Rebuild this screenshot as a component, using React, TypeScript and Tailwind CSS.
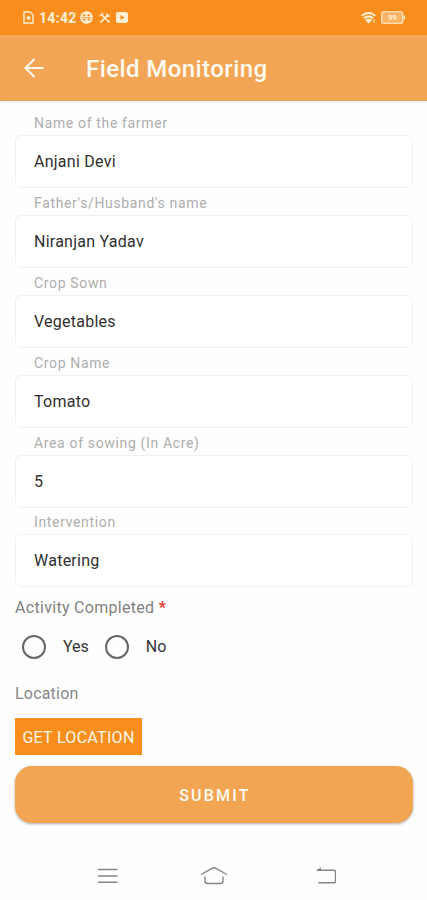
import { useState } from "react";

const fields = [
  { id: "farmer", label: "Name of the farmer", value: "Anjani Devi" },
  { id: "guardian", label: "Father's/Husband's name", value: "Niranjan Yadav" },
  { id: "cropSown", label: "Crop Sown", value: "Vegetables" },
  { id: "cropName", label: "Crop Name", value: "Tomato" },
  { id: "area", label: "Area of sowing (In Acre)", value: "5" },
  { id: "intervention", label: "Intervention", value: "Watering" },
];

function StatusBar() {
  return (
    <div className="flex h-[35px] items-center bg-[#f98e1e] pl-[23px] pr-[22px] text-[#fff0d5]">
      <svg className="h-[13px] w-[11px]" viewBox="0 0 11 13" fill="none" stroke="currentColor" strokeWidth="1.4">
        <path d="M1 1h6l3 3v8H1z" strokeLinejoin="round" />
        <path d="M5.5 5v4M3.5 7h4" strokeWidth="1.8" />
      </svg>
      <span className="ml-[5px] w-[37px] text-[14px] font-bold leading-none tracking-[0.3px]">14:42</span>
      <svg className="ml-1 h-[13px] w-[13px]" viewBox="0 0 13 13">
        <circle cx="6.5" cy="6.5" r="6.3" fill="currentColor" />
        <g fill="#f98e1e">
          <rect x="3" y="3.2" width="2.5" height="2" rx=".6" />
          <rect x="7.5" y="3.2" width="2.5" height="2" rx=".6" />
          <rect x="3" y="7.5" width="2.5" height="2" rx=".6" />
          <rect x="7.5" y="7.5" width="2.5" height="2" rx=".6" />
          <rect x="1.5" y="6" width="10" height=".7" />
        </g>
      </svg>
      <svg className="ml-[6px] h-[12px] w-[12px]" viewBox="0 0 12 12" fill="none" stroke="currentColor" strokeWidth="1.7">
        <path d="M3 3l7.5 7.5M1.5 10.5l7-7" />
        <path d="M1 4l3-3M8 1.5v2.5h3" />
      </svg>
      <svg className="ml-[5px] h-[11px] w-[12px]" viewBox="0 0 12 11">
        <rect width="12" height="11" rx="2.5" fill="currentColor" />
        <path d="M4.5 3v5l4-2.5z" fill="#f98e1e" />
      </svg>
      <svg className="ml-auto h-[12px] w-[15px]" viewBox="0 0 15 12" fill="none" stroke="currentColor" strokeWidth="2">
        <path d="M.8 3.8c4-3.6 9.4-3.6 13.4 0M3 6.3c2.8-2.4 6.2-2.4 9 0" />
        <path d="M4 8c2-1.6 5-1.6 7 0L7.5 11.5z" fill="currentColor" stroke="none" />
        <path d="M13 7v4" strokeWidth="1" />
      </svg>
      <svg className="ml-[5px] h-[13px] w-[24px]" viewBox="0 0 24 13">
        <rect x=".7" y=".7" width="21" height="11.6" rx="2" fill="#fbb466" stroke="currentColor" strokeWidth="1.1" />
        <path d="M22.5 4.5h1.5v4h-1.5z" fill="currentColor" />
        <text x="11.2" y="9" fill="currentColor" fontSize="7.5" fontWeight="700" textAnchor="middle">99</text>
      </svg>
    </div>
  );
}

function NavigationBar() {
  return (
    <nav className="mt-[43px] flex items-center pl-[98px] text-[#858585]">
      <svg className="h-5 w-5 shrink-0" viewBox="0 0 20 20" fill="none" stroke="currentColor" strokeWidth="1.4">
        <path d="M0 3.5h19.5M0 10h19.5M0 16.3h19.5" />
      </svg>
      <svg className="ml-[82px] h-5 w-[28px] shrink-0" viewBox="0 0 28 20" fill="none" stroke="currentColor" strokeWidth="1.4">
        <path d="M1 8.5L12 2.3Q14 1.3 16 2.3L27 8.5M5 10.5v4.5q0 2.5 2.5 2.5h13q2.5 0 2.5-2.5v-4.5" />
      </svg>
      <svg className="ml-[88px] h-5 w-5 shrink-0" viewBox="0 0 20 20" fill="none" stroke="currentColor" strokeWidth="1.4">
        <path d="M1 4.3h17q1.5 0 1.5 1.5v9.5q0 1.5-1.5 1.5H2.5" />
        <path d="M0 4.8l5-3.5v3.5z" fill="currentColor" stroke="none" />
      </svg>
    </nav>
  );
}

export default function App() {
  const [completed, setCompleted] = useState("");

  return (
    <div className="h-[900px] w-full overflow-hidden bg-[#fefefe] font-['Roboto',sans-serif]">
      <StatusBar />
      <header className="flex h-[66px] items-center border-b border-[#efa35a] bg-[#f2a655] pl-6 text-[#fffaf0] shadow-[0_1px_2px_#0000001a]">
        <button type="button" aria-label="Back">
          <svg className="h-5 w-5" viewBox="0 0 20 20" fill="none" stroke="currentColor" strokeWidth="2.1">
            <path d="M19.5 10H2M10.5 1L1.5 10l9 9" />
          </svg>
        </button>
        <h1 className="ml-[42px] mt-[3px] text-[24px] font-medium leading-none tracking-[0.42px]">Field Monitoring</h1>
      </header>

      <form className="pl-[15px] pr-[14px] pt-[13px]" onSubmit={(e) => e.preventDefault()}>
        {fields.map((field) => (
          <div key={field.id} className="h-[79.9px]">
            <label htmlFor={field.id} className="block h-[21px] pl-[19px] text-[14px] leading-[18px] tracking-[0.65px] text-[#aeaeae]">
              {field.label}
            </label>
            <input
              id={field.id}
              defaultValue={field.value}
              className="block h-[53px] w-full rounded-[6px] border border-[#f1f1f1] bg-white pl-[18px] text-[16px] tracking-[0.25px] text-[#303030] outline-none"
            />
          </div>
        ))}

        <p className="mt-[5px] text-[16px] leading-5 tracking-[0.3px] text-[#818181]">
          Activity Completed <span className="font-bold text-[#e93a35]">*</span>
        </p>
        <div className="mt-[17px] flex h-6 items-center pl-[7px] text-[16px] text-[#333333]">
          {["Yes", "No"].map((option) => (
            <label key={option} className="mr-[16px] flex items-center">
              <input
                type="radio"
                name="completed"
                checked={completed === option}
                onChange={() => setCompleted(option)}
                className="mr-[17px] h-6 w-6 appearance-none rounded-full border-2 border-[#666666] checked:border-[7px]"
              />
              {option}
            </label>
          ))}
        </div>

        <p className="mt-[25px] text-[16px] leading-5 tracking-[0.2px] text-[#888888]">Location</p>
        <button type="button" className="mt-[14px] block h-[37px] w-[127px] bg-[#f98e1d] pt-[2px] text-[16px] tracking-[0.3px] text-[#fff7e8]">
          GET LOCATION
        </button>
        <button
          type="submit"
          className="mt-[11px] block h-[57px] w-full rounded-[17px] bg-[#f2a654] pt-[2px] pl-[2px] text-[16px] font-medium tracking-[2.2px] text-[#fffaf0] shadow-[0_1px_3px_#00000055]"
        >
          SUBMIT
        </button>
      </form>
      <NavigationBar />
    </div>
  );
}
